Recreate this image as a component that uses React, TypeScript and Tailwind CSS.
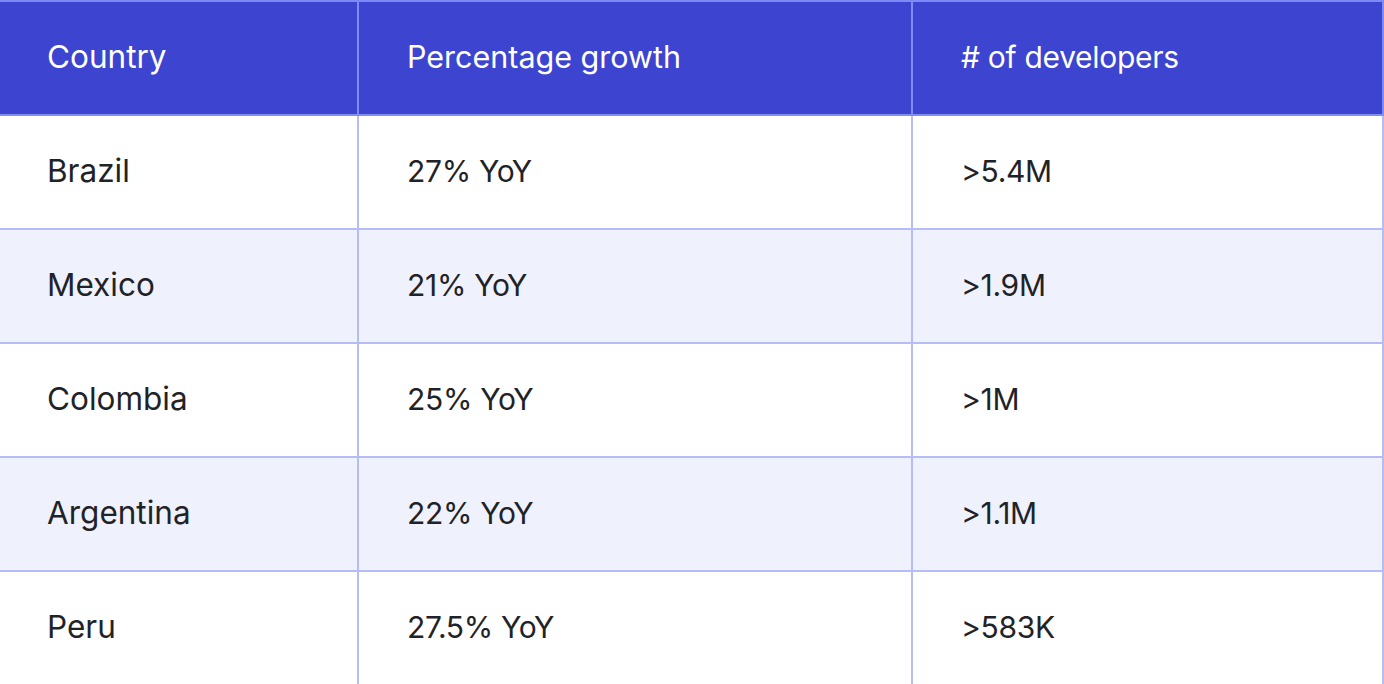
import React from "react";

const rows = [
  ["Brazil", "27% YoY", ">5.4M"],
  ["Mexico", "21% YoY", ">1.9M"],
  ["Colombia", "25% YoY", ">1M"],
  ["Argentina", "22% YoY", ">1.1M"],
  ["Peru", "27.5% YoY", ">583K"],
];

export default function App() {
  return (
    <div
      className="w-[1384px] h-[684px] overflow-hidden bg-white proportional-nums"
      style={{ fontFamily: "Inter, 'Noto Sans', sans-serif" }}
    >
      <div className="border-t-2 border-[#7b8af5]">
        <div className="flex h-[114px] bg-[#3c44d0] border-b-2 border-[#7f8ef2] text-white leading-none">
          <div className="w-[359px] shrink-0 border-r-2 border-[#7d8cf6] flex items-center pl-[47px] pb-[2px] text-[31.5px]">Country</div>
          <div className="w-[554px] shrink-0 border-r-2 border-[#7d8cf6] flex items-center pl-[48px] pb-[2px] text-[30.5px]">Percentage growth</div>
          <div className="flex-1 border-r-2 border-[#7d8cf6] flex items-center pl-[48px] pb-[2px] text-[30px] tracking-[-0.3px]">
            # of developers
          </div>
        </div>
        {rows.map((r, i) => (
          <div
            key={i}
            className={`flex h-[114px] border-b-2 border-[#b5bcf8] text-[#1f2328] leading-none ${
              i % 2 === 1 ? "bg-[#eff1fd]" : "bg-white"
            }`}
          >
            <div className="w-[359px] shrink-0 border-r-2 border-[#b5bcf8] flex items-center pl-[47px] pb-[2px] text-[31.5px]">{r[0]}</div>
            <div className="w-[554px] shrink-0 border-r-2 border-[#b5bcf8] flex items-center pl-[48px] pb-[2px] text-[30px] tracking-[-0.3px]">{r[1]}</div>
            <div className="flex-1 border-r-2 border-[#b5bcf8] flex items-center pl-[48px] pb-[2px] text-[30px] tracking-[-0.3px]">{r[2]}</div>
          </div>
        ))}
      </div>
    </div>
  );
}
